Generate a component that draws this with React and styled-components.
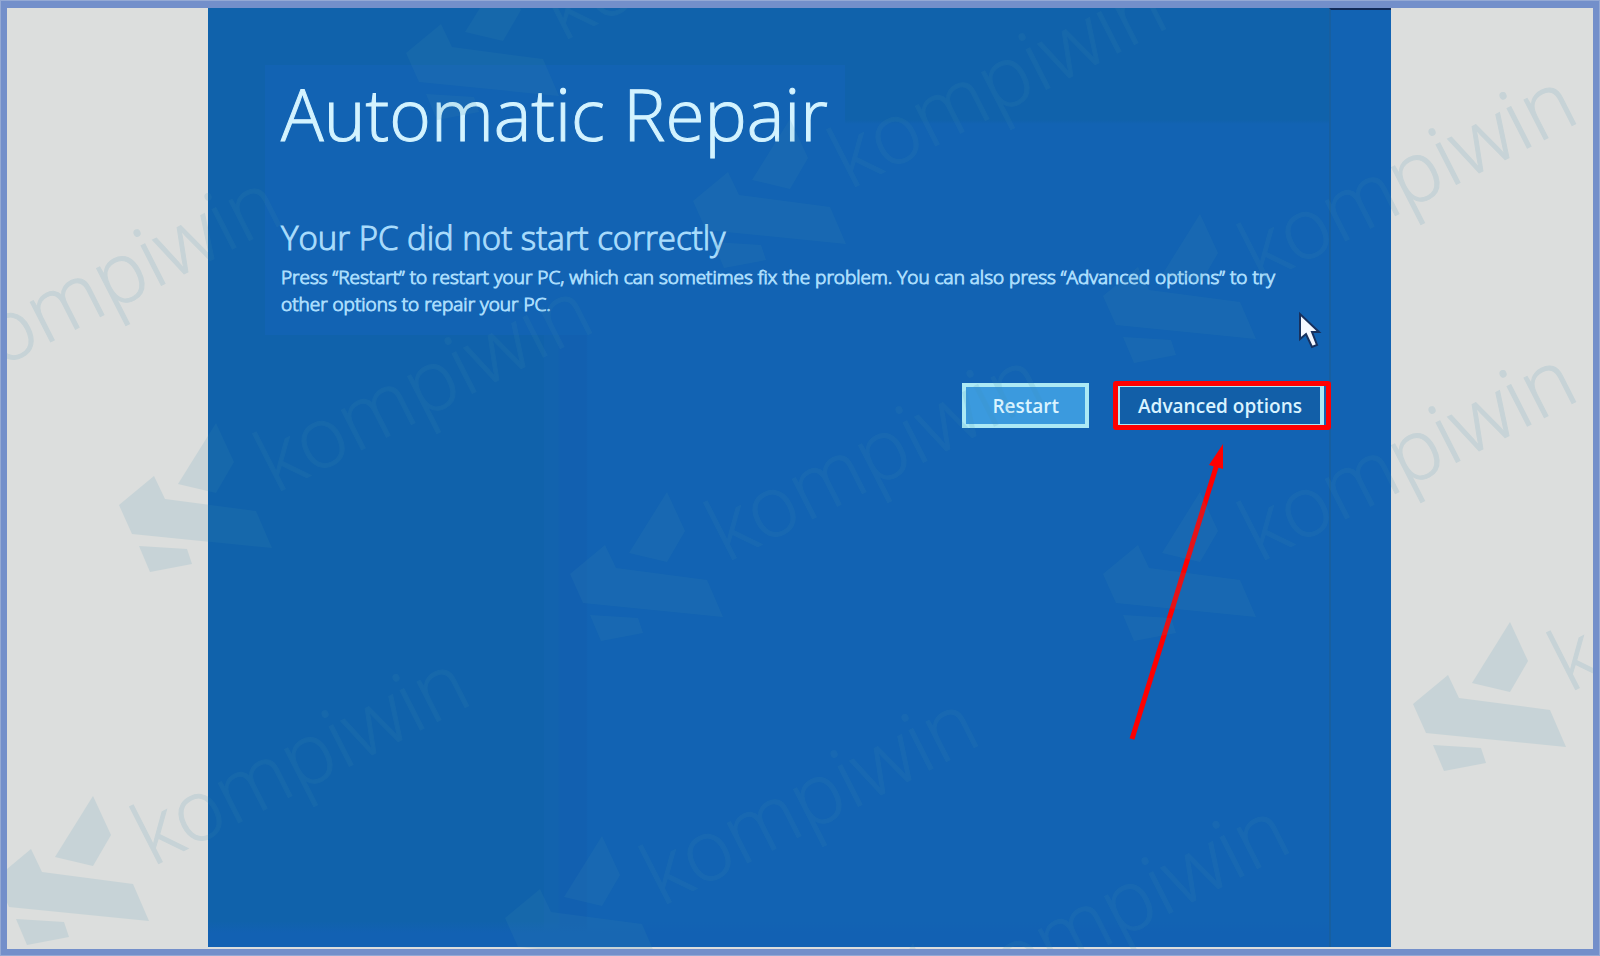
import React from "react";
import styled, { createGlobalStyle } from "styled-components";

const GlobalStyle = createGlobalStyle`
  * {
    box-sizing: border-box;
  }
  body {
    margin: 0;
    background: #738fca;
    font-family: "Open Sans", "Noto Sans", sans-serif;
  }
`;

const Frame = styled.div`
  position: relative;
  display: flex;
  min-height: 100vh;
  padding: 0 202px 2px 201px;
  overflow: hidden;
  background: #dcdedd;
  border: 7px solid #738fca;
  border-top-width: 8px;
  outline: 1px solid #94a9d4;
  outline-offset: -1px;
  @media only screen and (max-width: 1100px) {
    padding: 0 0 2px;
  }
`;

const Screen = styled.main`
  flex: 1;
  display: flex;
  min-width: 0;
  background: linear-gradient(to right, #1062ab 0 336px, #1263ae 336px 350px, #1260b0 352px 378px, #1263b3 380px);
`;

const Content = styled.div`
  flex: 1;
  min-width: 0;
  padding: 58px 0 40px 73px;
  background:
    linear-gradient(#1263b3, #1263b3) 57px 57px / 580px 270px no-repeat,
    linear-gradient(to top, #1261b3 0 14px, transparent 26px),
    linear-gradient(to bottom, #1062ab 0 112px, transparent 116px);
`;

const Seam = styled.div`
  flex: 0 0 62px;
  background: #1263b3;
  border-left: 2px solid #185f9f;
  border-top: 2px solid #102a58;
`;

const Title = styled.h1`
  margin: 0;
  color: #d3f3ff;
  font-size: 71px;
  font-weight: 300;
  line-height: 96px;
  -webkit-text-stroke: 1px #d3f3ff;
`;

const Subtitle = styled.h2`
  margin: 52px 0 0;
  color: #a9dcfc;
  font-size: 33px;
  font-weight: 300;
  line-height: 48px;
  -webkit-text-stroke: 1px #a9dcfc;
`;

const Message = styled.p`
  margin: 2px 0 0;
  padding-right: 30px;
  color: #bfe5fd;
  font-size: 19px;
  font-weight: 300;
  line-height: 27px;
  -webkit-text-stroke: 1px #a9dcfc;
`;

const Actions = styled.div`
  position: relative;
  display: flex;
  justify-content: flex-end;
  align-items: center;
  gap: 24px;
  margin: 63px -2px 0 0;
`;

const Button = styled.button`
  height: ${(props) => (props.$primary ? "45px" : "39px")};
  padding: 0 ${(props) => (props.$primary ? "26px" : "18px")};
  color: #d9f3ff;
  background: ${(props) => (props.$primary ? "#3b9ade" : "#125fa8")};
  border: solid #ace9f5;
  border-width: ${(props) => (props.$primary ? "4px" : "1px 4px 1px 2px")};
  font-family: inherit;
  font-size: 19px;
  font-weight: 600;
  line-height: 24px;
  white-space: nowrap;
`;

const Highlight = styled.div`
  position: relative;
  padding-right: 2px;
  border: 5px solid #ff0000;
  border-radius: 3px;
`;

const Arrow = styled.svg`
  position: absolute;
  left: 11px;
  top: calc(100% + 19px);
  width: 96px;
  height: 300px;
  pointer-events: none;
`;

const Cursor = styled.svg`
  position: absolute;
  right: 8px;
  top: -70px;
  width: 26px;
  height: 40px;
`;

const Watermark = styled.svg`
  position: absolute;
  inset: 0;
  width: 100%;
  height: 100%;
  pointer-events: none;
  fill: #4090b0;
  opacity: 0.13;
`;

const MarkText = styled.text`
  font-family: "Open Sans", "Noto Sans", sans-serif;
  font-size: 84px;
  font-weight: 300;
  stroke: #4090b0;
  stroke-width: 1px;
`;

const marks = [
  [503, -29],
  [790, 119],
  [-95, 315],
  [1200, 214],
  [216, 423],
  [667, 492],
  [1200, 492],
  [1510, 622],
  [93, 796],
  [602, 836],
  [913, 943],
];

const Mark = ({ x, y }) => (
  <g transform={`translate(${x} ${y})`}>
    <polygon points="0,0 18,39 0,70 -38,61" />
    <polygon points="-62,53 -51,76 40,88 56,125 -84,111 -97,82" />
    <polygon points="-77,123 -29,126 -24,141 -66,149" />
    <MarkText transform="translate(59 71) rotate(-27)">kompiwin</MarkText>
  </g>
);

const App = () => {
  return (
    <Frame>
      <GlobalStyle />
      <Screen>
        <Content>
          <Title>Automatic Repair</Title>
          <Subtitle>Your PC did not start correctly</Subtitle>
          <Message>
            Press “Restart” to restart your PC, which can sometimes fix the problem. You can also press
            “Advanced options” to try other options to repair your PC.
          </Message>
          <Actions>
            <Cursor viewBox="0 0 26 40" aria-hidden="true">
              <path
                d="M3 3 L3 28 L9 23 L15 36 L20 34 L15 21 L22 21 Z"
                fill="#f5f8ff"
                stroke="#17315f"
                strokeWidth="2"
              />
            </Cursor>
            <Button type="button" $primary>
              Restart
            </Button>
            <Highlight>
              <Button type="button">Advanced options</Button>
              <Arrow viewBox="0 0 96 300" aria-hidden="true">
                <line x1="3" y1="295" x2="88" y2="20" stroke="#ff0000" strokeWidth="5" />
                <polygon points="94,0 94,25 80,21" fill="#ff0000" />
              </Arrow>
            </Highlight>
          </Actions>
        </Content>
        <Seam />
      </Screen>
      <Watermark viewBox="7 8 1586 941" preserveAspectRatio="xMidYMid slice" aria-hidden="true">
        {marks.map(([x, y]) => (
          <Mark key={`${x},${y}`} x={x} y={y} />
        ))}
      </Watermark>
    </Frame>
  );
};

export default App;
